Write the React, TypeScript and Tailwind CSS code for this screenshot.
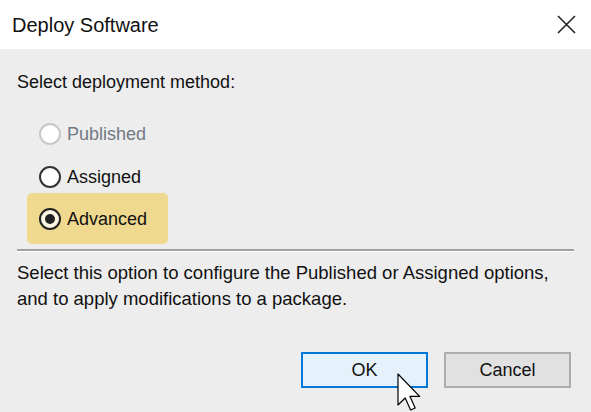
const options = [
  { label: "Published", state: "disabled" },
  { label: "Assigned", state: "off" },
  { label: "Advanced", state: "on" },
];

const Radio = ({ state }: { state: string }) => {
  if (state === "disabled") {
    return <span className="w-[22px] h-[22px] rounded-full border-2 border-[#c8c8c8] bg-white shrink-0" />;
  }
  if (state === "off") {
    return <span className="w-[22px] h-[22px] rounded-full border-2 border-[#333333] bg-white shrink-0" />;
  }
  return (
    <span className="w-[22px] h-[22px] rounded-full border-2 border-[#222222] bg-[#fbf5e2] shrink-0 flex items-center justify-center">
      <span className="w-[10px] h-[10px] rounded-full bg-[#222222]" />
    </span>
  );
};

const App = () => {
  return (
    <div className="w-[591px] h-[412px] bg-[#ededed] font-['Liberation_Sans',Arial,sans-serif] text-[#111] relative overflow-hidden">
      <div className="h-[49px] bg-white flex items-center justify-between pl-[12px] pr-[15px]">
        <span className="text-[20px]">Deploy Software</span>
        <svg width="19" height="19" viewBox="0 0 19 19">
          <path d="M1 1 L18 18 M18 1 L1 18" stroke="#222" strokeWidth="1.6" />
        </svg>
      </div>

      <div className="px-[17px]">
        <div className="text-[18px] leading-[26px] mt-[20px]">Select deployment method:</div>

        <div className="mt-[28px] pl-[10px] flex flex-col">
          {options.map(({ label, state }) => {
            const row = (
              <div className="flex items-center gap-[6px]">
                <Radio state={state} />
                <span className={`text-[18px] leading-[22px] ${state === "disabled" ? "text-[#727a85]" : ""}`}>{label}</span>
              </div>
            );
            if (state === "on") {
              return (
                <div key={label} className="mt-[5px] w-[141px] h-[51px] rounded-[5px] bg-[#efd98f] flex items-center pl-[12px]">
                  {row}
                </div>
              );
            }
            return (
              <div key={label} className={`pl-[12px] ${label === "Assigned" ? "mt-[21px]" : ""}`}>
                {row}
              </div>
            );
          })}
        </div>

        <div className="mt-[5px] h-[2px] bg-[#a0a0a0] border-b border-white box-content" />

        <p className="mt-[8px] text-[18.5px] leading-[26px]">
          Select this option to configure the Published or Assigned options,
          <br />
          and to apply modifications to a package.
        </p>
      </div>

      <div className="absolute left-0 right-0 top-[352px] flex justify-end gap-[16px] pr-[20px]">
        <button className="w-[127px] h-[36px] bg-[#e5f1fb] border-2 border-[#0078d7] text-[18px]">OK</button>
        <button className="w-[127px] h-[36px] bg-[#e1e1e1] border-2 border-[#adadad] text-[18px]">Cancel</button>
      </div>

      <svg className="absolute left-[396px] top-[372px]" width="26" height="40" viewBox="0 0 13 20">
        <path d="M1 1 L1 16.5 L4.6 13 L7.3 19 L9.6 18 L7 12.2 L11.8 12.2 Z" fill="#fff" stroke="#000" strokeWidth="0.6" strokeLinejoin="round" />
      </svg>
    </div>
  );
};

export default App;
